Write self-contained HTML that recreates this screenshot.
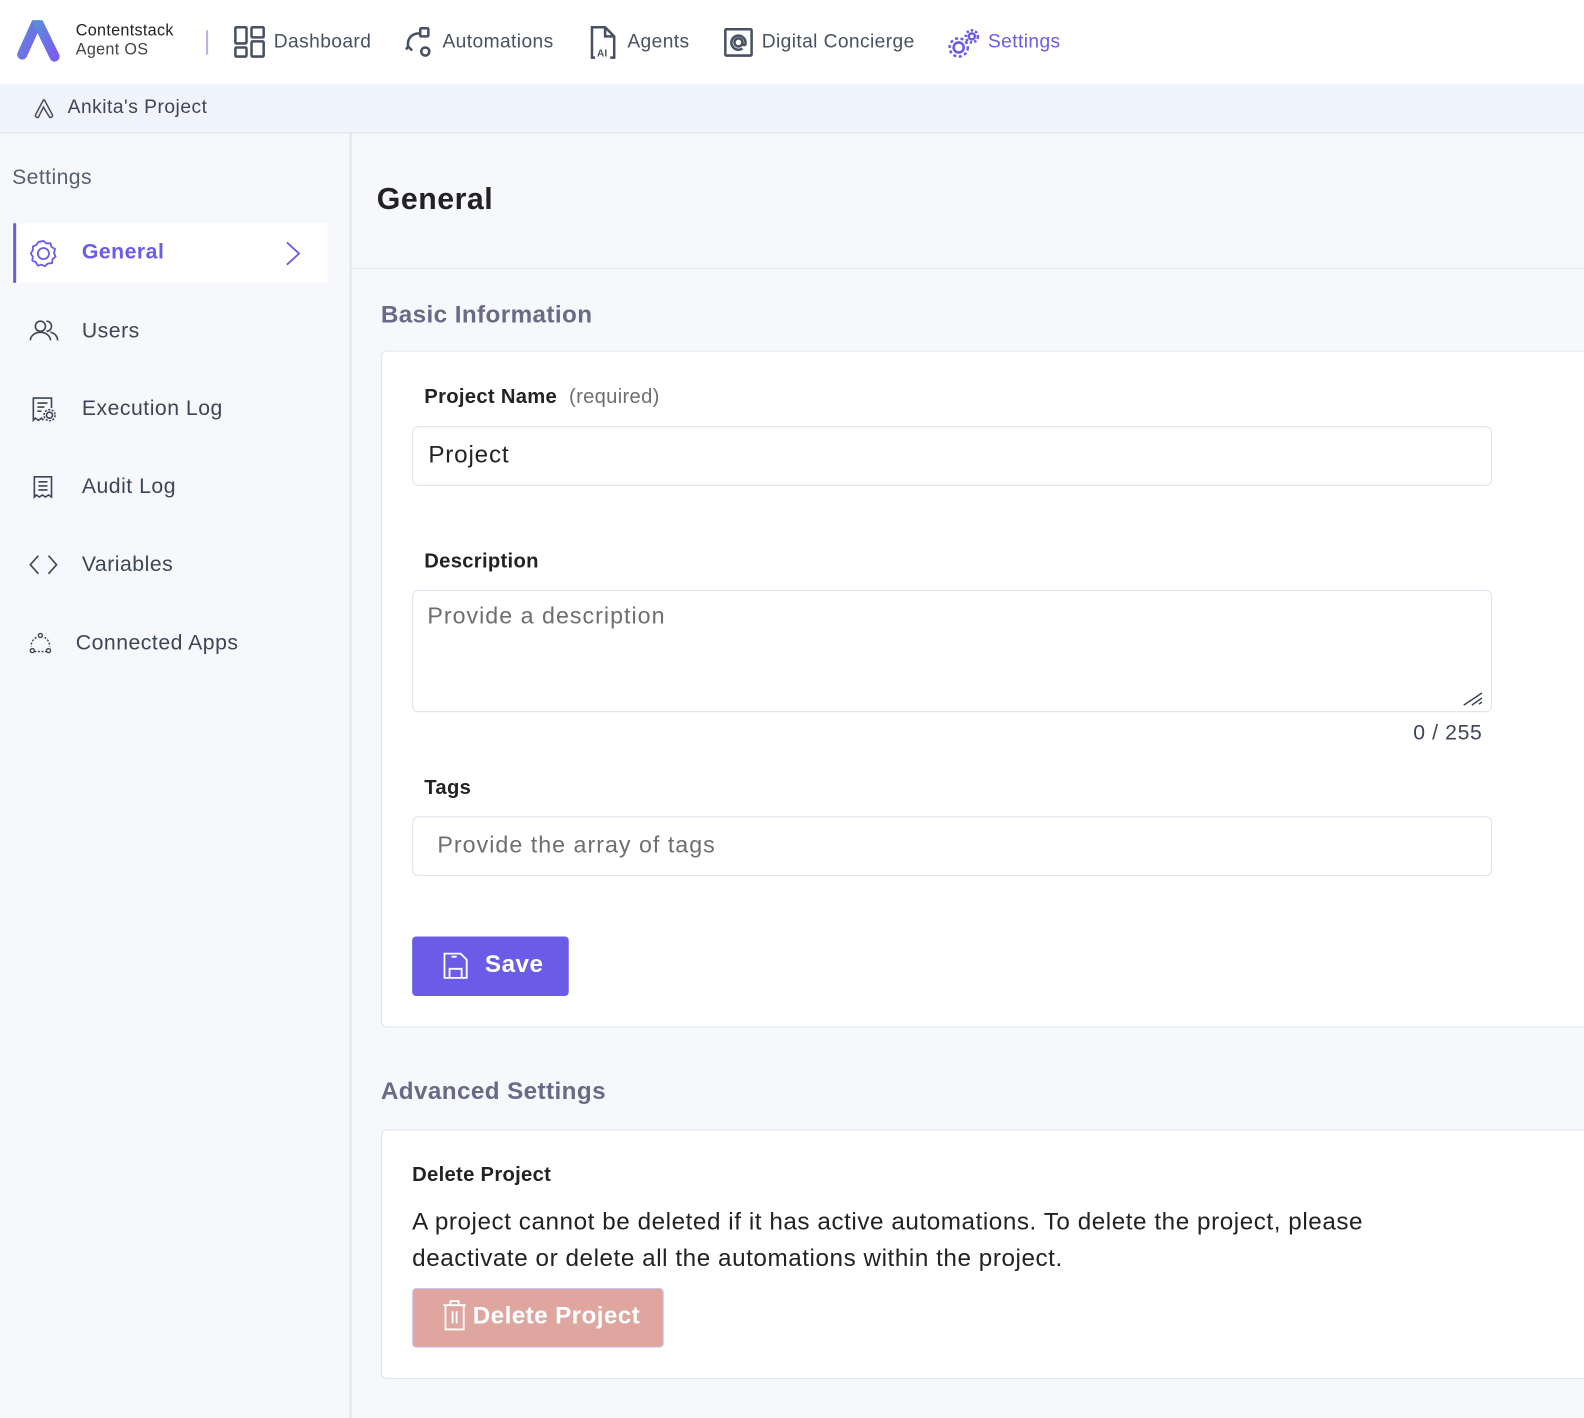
<!DOCTYPE html>
<html><head><meta charset="utf-8"><style>
*{box-sizing:border-box;margin:0;padding:0}
body{width:1584px;height:1404px;overflow:hidden;background:#f7f8fc;font-family:"Liberation Sans",sans-serif;position:relative;color:#222}
#w{position:absolute;left:0;top:0;width:1568px;height:1390px;transform:scale(1.0102);transform-origin:0 0}
.a{position:absolute}
.nav{font-size:19px;color:#475161;top:31px;letter-spacing:0.4px}
.side{font-size:21px;color:#3d4656;left:81px;letter-spacing:0.5px}
.lbl{font-size:20px;font-weight:bold;color:#222;letter-spacing:0.3px}
.inp{position:absolute;left:408px;width:1069px;background:#fff;border:1px solid #dde1ee;border-radius:6px}
.ph{font-size:23px;color:#6e6e6e;letter-spacing:1px}
</style></head><body><div id="w">
<div class="a" style="left:0;top:0;width:1568px;height:83px;background:#fff"></div>
<svg class="a" style="left:16px;top:20px" width="48" height="42" viewBox="0 0 48 42">
<defs><linearGradient id="g" x1="0" y1="0" x2="1" y2="1"><stop offset="0" stop-color="#5b8bd8"/><stop offset="1" stop-color="#7b5cf0"/></linearGradient></defs>
<path d="M20 3 L6 34" stroke="url(#g)" stroke-width="10" stroke-linecap="round"/>
<path d="M22 3 L38 36" stroke="url(#g)" stroke-width="10" stroke-linecap="round"/></svg>
<div class="a" style="left:75px;top:21px;font-size:16px;line-height:19px;color:#222;letter-spacing:0.3px">Contentstack<br><span style="color:#444">Agent OS</span></div>
<div class="a" style="left:204px;top:30px;width:2px;height:24px;background:#b9b0ee"></div>
<svg class="a" style="left:231px;top:25px" width="32" height="33" viewBox="0 0 32 33" fill="none" stroke="#475161" stroke-width="2.5"><rect x="2" y="2" width="11" height="16" rx="1"/><rect x="18" y="2" width="12" height="10" rx="1"/><rect x="2" y="22" width="11" height="9" rx="1"/><rect x="18" y="16" width="12" height="15" rx="1"/></svg>
<div class="a nav" style="left:271px">Dashboard</div>
<svg class="a" style="left:400px;top:26px" width="30" height="32" viewBox="0 0 30 32" fill="none" stroke="#475161" stroke-width="2.5"><rect x="16" y="2" width="8" height="8" rx="1"/><circle cx="21" cy="25" r="4"/><path d="M15 7 C6 7 3 14 4 20 L8 24 M4 20 L2 23"/></svg>
<div class="a nav" style="left:438px">Automations</div>
<svg class="a" style="left:583px;top:25px" width="28" height="34" viewBox="0 0 28 34" fill="none" stroke="#475161" stroke-width="2.5"><path d="M6 32 H3 V2 H16 L25 11 V32 H21 M16 2 V11 H25"/><text x="8" y="31" font-size="10" font-weight="bold" fill="#475161" stroke="none" font-family="Liberation Sans">AI</text></svg>
<div class="a nav" style="left:621px">Agents</div>
<svg class="a" style="left:716px;top:27px" width="30" height="30" viewBox="0 0 30 30" fill="none" stroke="#475161" stroke-width="2.5"><rect x="2" y="2" width="26" height="26" rx="1"/><circle cx="15" cy="15" r="4"/><path d="M19 15 v2 a2 2 0 0 0 3 0 v-2 a7 7 0 1 0 -3 6"/></svg>
<div class="a nav" style="left:754px">Digital Concierge</div>
<svg class="a" style="left:937px;top:27px" width="34" height="32" viewBox="0 0 34 32" fill="none" stroke="#6b5ce7" stroke-width="2.5"><circle cx="12" cy="20" r="5"/><circle cx="12" cy="20" r="9" stroke-dasharray="3 2.5"/><circle cx="25" cy="9" r="3"/><circle cx="25" cy="9" r="6" stroke-dasharray="2.5 2"/></svg>
<div class="a nav" style="left:978px;color:#6b5ce7">Settings</div>
<div class="a" style="left:0;top:83px;width:1568px;height:49px;background:#eff4fd;border-bottom:1px solid #dfe3ee"></div>
<svg class="a" style="left:33px;top:97px" width="21" height="21" viewBox="0 0 21 21" fill="none" stroke="#475161" stroke-width="1.5"><path d="M10 2 L2 17 a2 2 0 0 0 3 2 L10 9 L16 19 a2 2 0 0 0 3 -2 L11 2 Z"/></svg>
<div class="a" style="left:67px;top:96px;font-size:19px;color:#3d4656;letter-spacing:0.5px">Ankita's Project</div>
<div class="a" style="left:346px;top:132px;width:2px;height:1272px;background:#e1e5ee"></div>
<div class="a" style="left:12px;top:164px;font-size:21px;color:#555f6f;letter-spacing:0.4px">Settings</div>
<div class="a" style="left:13px;top:221px;width:311px;height:59px;background:#fff;border-left:3px solid #6b5ce7"></div>
<svg class="a" style="left:29px;top:237px" width="28" height="28" viewBox="0 0 28 28" fill="none" stroke="#6b5ce7" stroke-width="1.8"><path d="M14 1.5 L17 4 L21 3.8 L22 7.5 L25.5 9.5 L24.5 13.5 L26 17 L23 19.5 L22.5 23.5 L18.5 23.8 L15.5 26.5 L12 25 L8.5 26 L6.5 22.5 L3 21 L3.5 17 L1.5 14 L3.5 10.5 L3.5 7 L7 5.5 L9 2.5 Z" stroke-linejoin="round"/><circle cx="14" cy="14" r="5.5"/></svg>
<div class="a side" style="top:238px;color:#6b5ce7;font-weight:bold">General</div>
<svg class="a" style="left:282px;top:239px" width="16" height="24" viewBox="0 0 16 24" fill="none" stroke="#6b5ce7" stroke-width="1.8"><path d="M2 1 L14 12 L2 23"/></svg>
<svg class="a" style="left:29px;top:316px" width="29" height="22" viewBox="0 0 29 22" fill="none" stroke="#3d4656" stroke-width="1.6"><circle cx="11" cy="7" r="5"/><path d="M1 21 a10 8 0 0 1 20 0 M17 2 a5 5 0 0 1 0 10 M21 13 a8 8 0 0 1 7 8"/></svg>
<div class="a side" style="top:316px">Users</div>
<svg class="a" style="left:31px;top:392px" width="26" height="26" viewBox="0 0 26 26" fill="none" stroke="#3d4656" stroke-width="1.6"><path d="M12 24 L10 22 L7 24 L4 22 L2 24 V2 H20 V12 M6 7 H16 M6 11 H13 M6 15 H10"/><circle cx="18" cy="19" r="3"/><circle cx="18" cy="19" r="5.5" stroke-dasharray="2 1.5"/></svg>
<div class="a side" style="top:393px">Execution Log</div>
<svg class="a" style="left:32px;top:470px" width="21" height="24" viewBox="0 0 21 24" fill="none" stroke="#3d4656" stroke-width="1.6"><path d="M2 2 H19 V22 L16 20 L13 22 L10 20 L7 22 L4 20 L2 22 Z M6 7 H15 M6 11 H15 M6 15 H15"/></svg>
<div class="a side" style="top:470px">Audit Log</div>
<svg class="a" style="left:28px;top:549px" width="30" height="20" viewBox="0 0 30 20" fill="none" stroke="#3d4656" stroke-width="1.6"><path d="M10 1 L2 10 L10 19 M20 1 L28 10 L20 19"/></svg>
<div class="a side" style="top:547px">Variables</div>
<svg class="a" style="left:29px;top:626px" width="22" height="22" viewBox="0 0 22 22" fill="none" stroke="#3d4656" stroke-width="1.4"><circle cx="11" cy="3" r="2"/><circle cx="3" cy="18" r="2"/><circle cx="19" cy="18" r="2"/><path d="M7 5 A9 9 0 0 0 2 14 M15 5 A9 9 0 0 1 20 14 M5 19 H17" stroke-dasharray="2 1.5"/></svg>
<div class="a side" style="left:75px;top:625px">Connected Apps</div>
<div class="a" style="left:348px;top:265px;width:1236px;height:1px;background:#dfe3ee"></div>
<div class="a" style="left:373px;top:181px;font-size:30px;font-weight:bold;color:#222;letter-spacing:0.5px">General</div>
<div class="a" style="left:377px;top:298px;font-size:24px;font-weight:bold;color:#6a6a86;letter-spacing:0.4px">Basic Information</div>
<div class="a" style="left:377px;top:347px;width:1220px;height:670px;background:#fff;border:1px solid #dfe3ee;border-radius:6px"></div>
<div class="a lbl" style="left:420px;top:382px">Project Name <span style="font-weight:normal;color:#6e6e6e;margin-left:6px">(required)</span></div>
<div class="inp" style="top:422px;height:59px"></div>
<div class="a" style="left:424px;top:437px;font-size:24px;color:#222;letter-spacing:0.8px">Project</div>
<div class="a lbl" style="left:420px;top:545px">Description</div>
<div class="inp" style="top:584px;height:121px"></div>
<div class="a ph" style="left:423px;top:596px">Provide a description</div>
<svg class="a" style="left:1447px;top:682px" width="22" height="18" viewBox="0 0 22 18" fill="none" stroke="#3d4656" stroke-width="1.5"><path d="M2 16 L20 4 M10 16 L20 9 M17 15 L20 13"/></svg>
<div class="a" style="left:1399px;top:714px;font-size:21px;color:#3d4656;letter-spacing:0.6px">0 / 255</div>
<div class="a lbl" style="left:420px;top:769px">Tags</div>
<div class="inp" style="top:808px;height:59px"></div>
<div class="a ph" style="left:433px;top:823px">Provide the array of tags</div>
<div class="a" style="left:408px;top:927px;width:155px;height:59px;background:#6b5ce7;border-radius:4px"></div>
<svg class="a" style="left:438px;top:942px" width="26" height="28" viewBox="0 0 26 28" fill="none" stroke="#fff" stroke-width="1.8"><path d="M2 2 H18 L24 8 V26 H2 Z M9 5 H14 M7 26 V17 H19 V26"/></svg>
<div class="a" style="left:480px;top:941px;font-size:24px;font-weight:bold;color:#fff;letter-spacing:0.5px">Save</div>
<div class="a" style="left:377px;top:1067px;font-size:24px;font-weight:bold;color:#6a6a86;letter-spacing:0.4px">Advanced Settings</div>
<div class="a" style="left:377px;top:1118px;width:1220px;height:247px;background:#fff;border:1px solid #dfe3ee;border-radius:6px"></div>
<div class="a lbl" style="left:408px;top:1152px">Delete Project</div>
<div class="a" style="left:408px;top:1192px;font-size:24px;line-height:36px;color:#222;letter-spacing:0.55px;white-space:nowrap">A project cannot be deleted if it has active automations. To delete the project, please<br>deactivate or delete all the automations within the project.</div>
<div class="a" style="left:408px;top:1275px;width:249px;height:59px;background:#dea69e;border:1px solid #c9bff0;border-radius:4px"></div>
<svg class="a" style="left:438px;top:1286px" width="24" height="32" viewBox="0 0 24 32" fill="none" stroke="#fff" stroke-width="1.8"><path d="M1 6 H23 M8 6 V2 H16 V6 M3 6 V30 H21 V6 M10 12 V24 M14 12 V24"/></svg>
<div class="a" style="left:468px;top:1289px;font-size:24px;font-weight:bold;color:#fff;letter-spacing:0.4px">Delete Project</div>
</div></body></html>
